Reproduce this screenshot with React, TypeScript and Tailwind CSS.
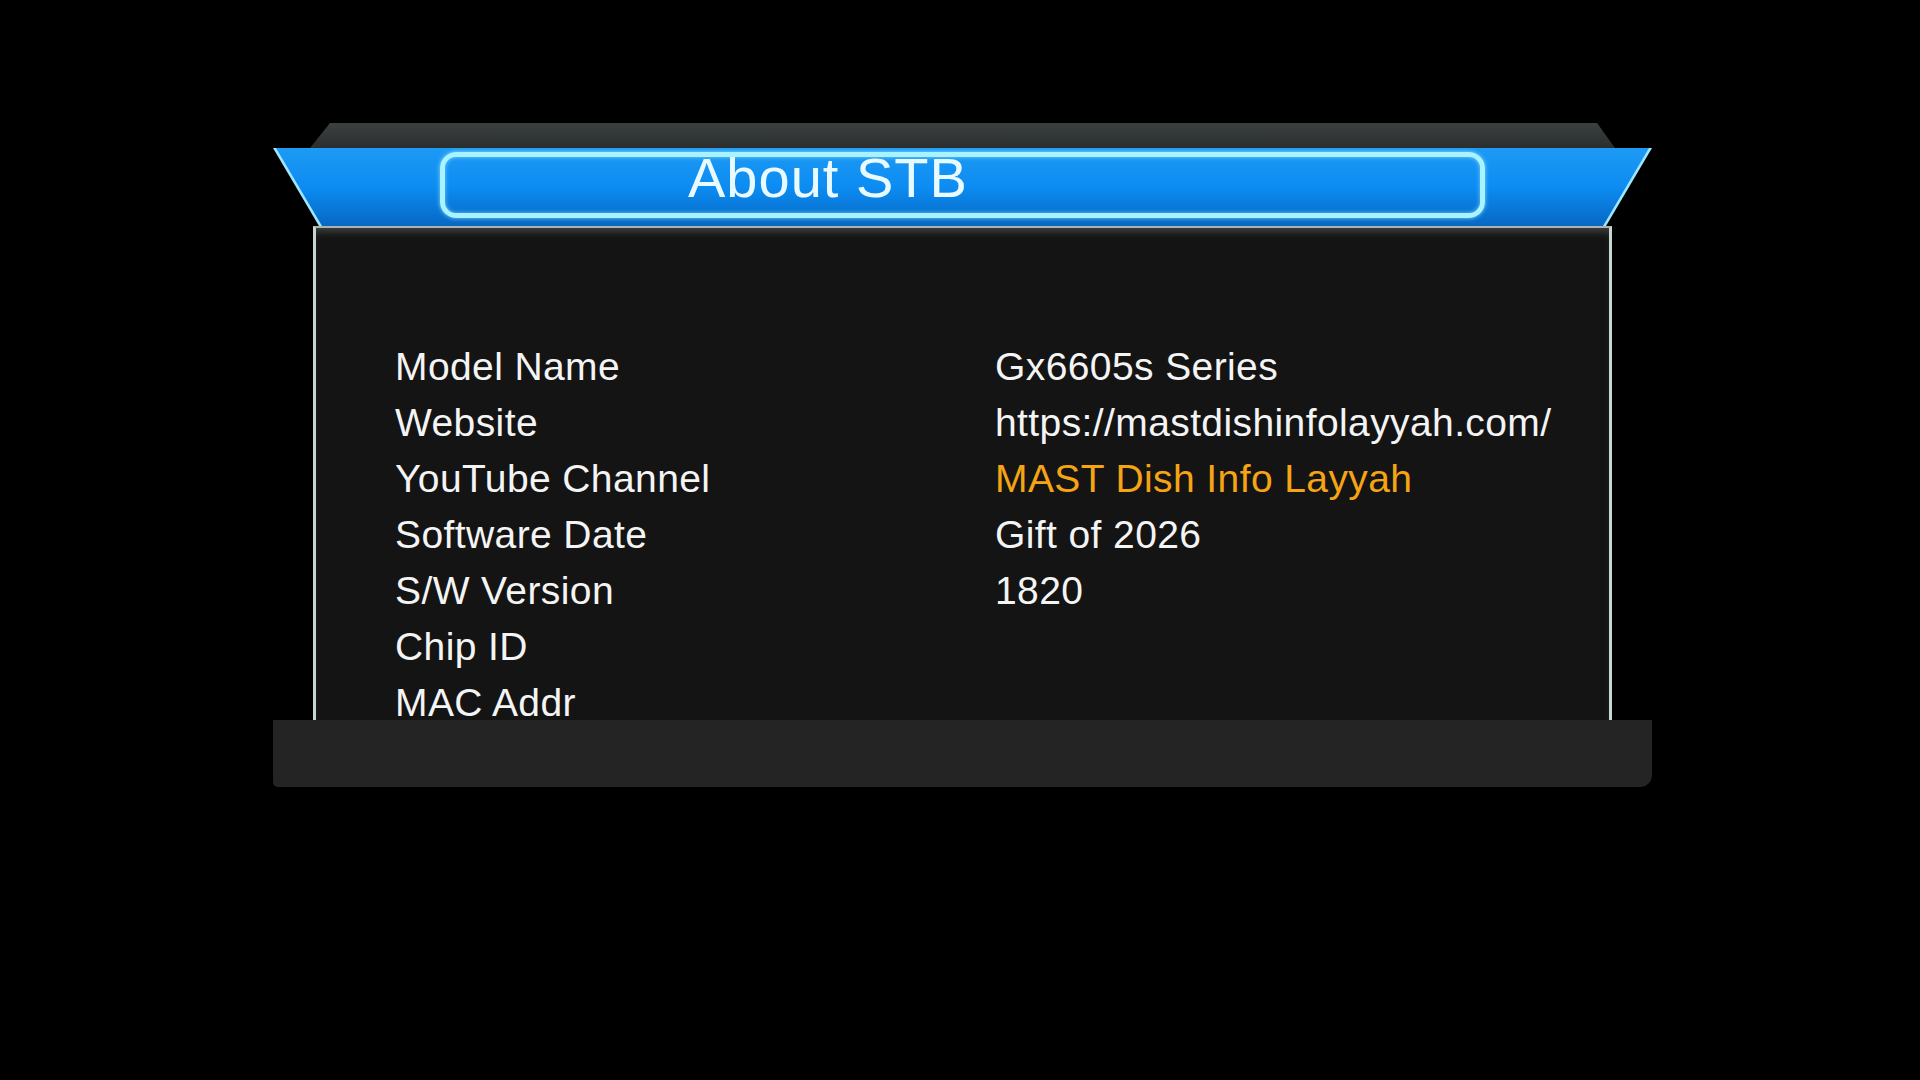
import React from "react";

type Row = { label: string; value?: string; accent?: boolean };

const rows: Row[] = [
  { label: "Model Name", value: "Gx6605s Series" },
  { label: "Website", value: "https://mastdishinfolayyah.com/" },
  { label: "YouTube Channel", value: "MAST Dish Info Layyah", accent: true },
  { label: "Software Date", value: "Gift of 2026" },
  { label: "S/W Version", value: "1820" },
  { label: "Chip ID" },
  { label: "MAC Addr" },
];

const App: React.FC = () => {
  return (
    <div className="min-h-screen w-full bg-black pt-[123px] font-['Liberation_Sans',Arial,sans-serif]">
      <div className="ml-[273px] w-[1380px] flex flex-col">

        {/* Dark top ledge */}
        <div className="h-[25px] w-full bg-gradient-to-b from-[#3b4040] to-[#2a2e2e] [clip-path:polygon(57px_0,1324px_0,1342px_100%,37px_100%)]" />

        {/* Blue title band with cyan slanted edges */}
        <div className="relative h-[78px] w-full bg-[#9fe6ff] [clip-path:polygon(0_0,1379px_0,1333px_100%,46px_100%)]">
          <div className="absolute inset-0 bg-gradient-to-b from-[#1d9af4] via-[#0c8cf2] to-[#0768c4] [clip-path:polygon(3px_0,1376px_0,1330px_100%,49px_100%)]" />
          <div className="relative ml-[167px] mt-[4px] h-[66px] w-[1045px] rounded-[16px] border-[5px] border-[#a9f2ff] shadow-[0_0_4px_rgba(160,240,255,0.8),inset_0_0_4px_rgba(160,240,255,0.7)] flex items-start">
            <span className="pl-[243px] text-[56px] leading-[42px] text-[#e8faff] tracking-[1px]">
              About STB
            </span>
          </div>
        </div>

        {/* Info panel */}
        <div className="ml-[40px] w-[1299px] h-[494px] overflow-hidden bg-[#141414] border-x-[3px] border-t-2 border-x-[#c6d7d0] border-t-[#aab3b0] shadow-[inset_0_7px_8px_-4px_rgba(110,115,115,0.55)]">
          <div className="pt-[121px] pl-[79px] grid grid-cols-[600px_1fr] gap-y-[21px] text-[39px] leading-[35px] tracking-[0.4px] text-[#f4f4f4]">
            {rows.map((r) => (
              <React.Fragment key={r.label}>
                <div>{r.label}</div>
                <div className={r.accent ? "text-[#f5a414]" : ""}>{r.value ?? ""}</div>
              </React.Fragment>
            ))}
          </div>
        </div>

        {/* Bottom bar */}
        <div className="h-[67px] w-[1379px] bg-[#242424] rounded-bl-[5px] rounded-br-[12px]" />
      </div>
    </div>
  );
};

export default App;
